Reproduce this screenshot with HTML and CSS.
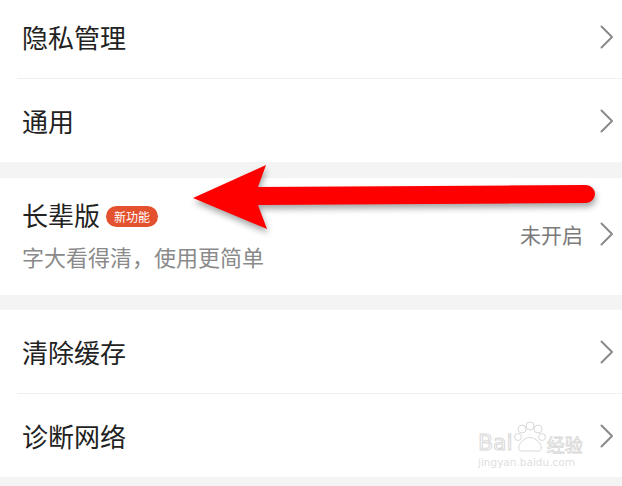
FILE: index.html
```html
<!DOCTYPE html>
<html>
<head>
    <meta charset="utf-8">
    <title>设置</title>
    <link rel="stylesheet" href="styles.css">
</head>
<body>
    <div class="page">
        <div class="group">
            <div class="row">
                <span class="label">隐私管理</span>
                <svg class="chevron" viewBox="0 0 14 24"><polyline points="1.5,1.5 12,12 1.5,22.5"/></svg>
            </div>
            <div class="row">
                <span class="label">通用</span>
                <svg class="chevron" viewBox="0 0 14 24"><polyline points="1.5,1.5 12,12 1.5,22.5"/></svg>
            </div>
        </div>

        <div class="group">
            <div class="row row-tall">
                <div class="text-block">
                    <div class="title-line">
                        <span class="label">长辈版</span>
                        <span class="badge">新功能</span>
                    </div>
                    <div class="sub">字大看得清，使用更简单</div>
                </div>
                <span class="value">未开启</span>
                <svg class="chevron" viewBox="0 0 14 24"><polyline points="1.5,1.5 12,12 1.5,22.5"/></svg>
            </div>
        </div>

        <div class="group">
            <div class="row">
                <span class="label">清除缓存</span>
                <svg class="chevron" viewBox="0 0 14 24"><polyline points="1.5,1.5 12,12 1.5,22.5"/></svg>
            </div>
            <div class="row">
                <span class="label">诊断网络</span>
                <svg class="chevron" viewBox="0 0 14 24"><polyline points="1.5,1.5 12,12 1.5,22.5"/></svg>
            </div>
        </div>
    </div>

    <!-- annotation arrow drawn over the screenshot -->
    <svg class="arrow" width="622" height="486" viewBox="0 0 622 486">
        <path d="M193,198 L266,165 L258,187 L586,185 A9,9 0 0 1 586,203 L258,205 L267,229 Z"/>
    </svg>

    <div class="watermark">
        <div class="wm-top">
            <span class="wm-bai">Bai</span>
            <svg class="wm-paw" width="34" height="34" viewBox="0 0 34 34">
                <circle cx="9" cy="8" r="4"/>
                <circle cx="17" cy="5" r="4"/>
                <circle cx="25" cy="8" r="4"/>
                <circle cx="5" cy="16" r="3.5"/>
                <circle cx="29" cy="16" r="3.5"/>
                <path d="M8,30 C4,30 5,22 12,18 C15,16 19,16 22,18 C29,22 30,30 26,30 Z"/>
            </svg>
            <span class="wm-jy">经验</span>
        </div>
        <div class="wm-url">jingyan.baidu.com</div>
    </div>
</body>
</html>
```

FILE: styles.css
```css
body {
    margin: 0;
    background-color: #f4f4f4;
    font-family: "Noto Sans CJK SC", "Noto Sans", sans-serif;
    color: #222;
    width: 622px;
    height: 486px;
    overflow: hidden;
}

.page {
    margin-top: -5px;
}

.group {
    background-color: #fff;
    margin-bottom: 16px;
}

.group:nth-child(2) {
    margin-bottom: 15px;
}

.row {
    display: flex;
    align-items: center;
    height: 83px;
    margin-left: 17px;
    padding-left: 5px;
    padding-right: 8px;
}

.row + .row {
    border-top: 1px solid #f0f0f0;
}

.label {
    font-size: 26px;
    line-height: 34px;
    flex: 1;
}

.chevron {
    width: 14px;
    height: 24px;
    fill: none;
    stroke: #8a8a8a;
    stroke-width: 2;
    stroke-linecap: round;
    stroke-linejoin: round;
}

.row-tall {
    height: auto;
    padding-top: 20px;
    padding-bottom: 25px;
}

.text-block {
    flex: 1;
}

.title-line {
    display: flex;
    align-items: center;
}

.title-line .label {
    flex: none;
}

.badge {
    margin-left: 6px;
    margin-top: 2px;
    background-color: #e4512f;
    color: #fff;
    font-size: 12px;
    line-height: 21px;
    height: 21px;
    padding: 0 8px;
    border-radius: 11px;
}

.sub {
    margin-top: 10px;
    font-size: 22px;
    line-height: 28px;
    color: #8a8a8a;
}

.value {
    font-size: 21px;
    color: #7a7a7a;
    margin-right: 17px;
}

.arrow {
    position: absolute;
    left: 0;
    top: 0;
    fill: #ff0000;
    filter: drop-shadow(1px 4px 3px rgba(0, 0, 0, 0.35));
}

.watermark {
    position: absolute;
    left: 478px;
    top: 419px;
    color: #e2e2e2;
}

.wm-top {
    display: flex;
    align-items: flex-end;
    height: 36px;
}

.wm-bai {
    font-family: "DejaVu Sans", sans-serif;
    font-size: 22px;
    line-height: 24px;
    color: #fff;
    -webkit-text-stroke: 1px #d8d8d8;
}

.wm-paw {
    fill: #fff;
    stroke: #d8d8d8;
    stroke-width: 1;
}

.wm-jy {
    font-size: 18px;
    line-height: 22px;
    color: #fff;
    -webkit-text-stroke: 0.8px #d8d8d8;
}

.wm-url {
    font-family: "DejaVu Sans", sans-serif;
    font-size: 10.5px;
    line-height: 14px;
    color: #e0e0e0;
}
```
